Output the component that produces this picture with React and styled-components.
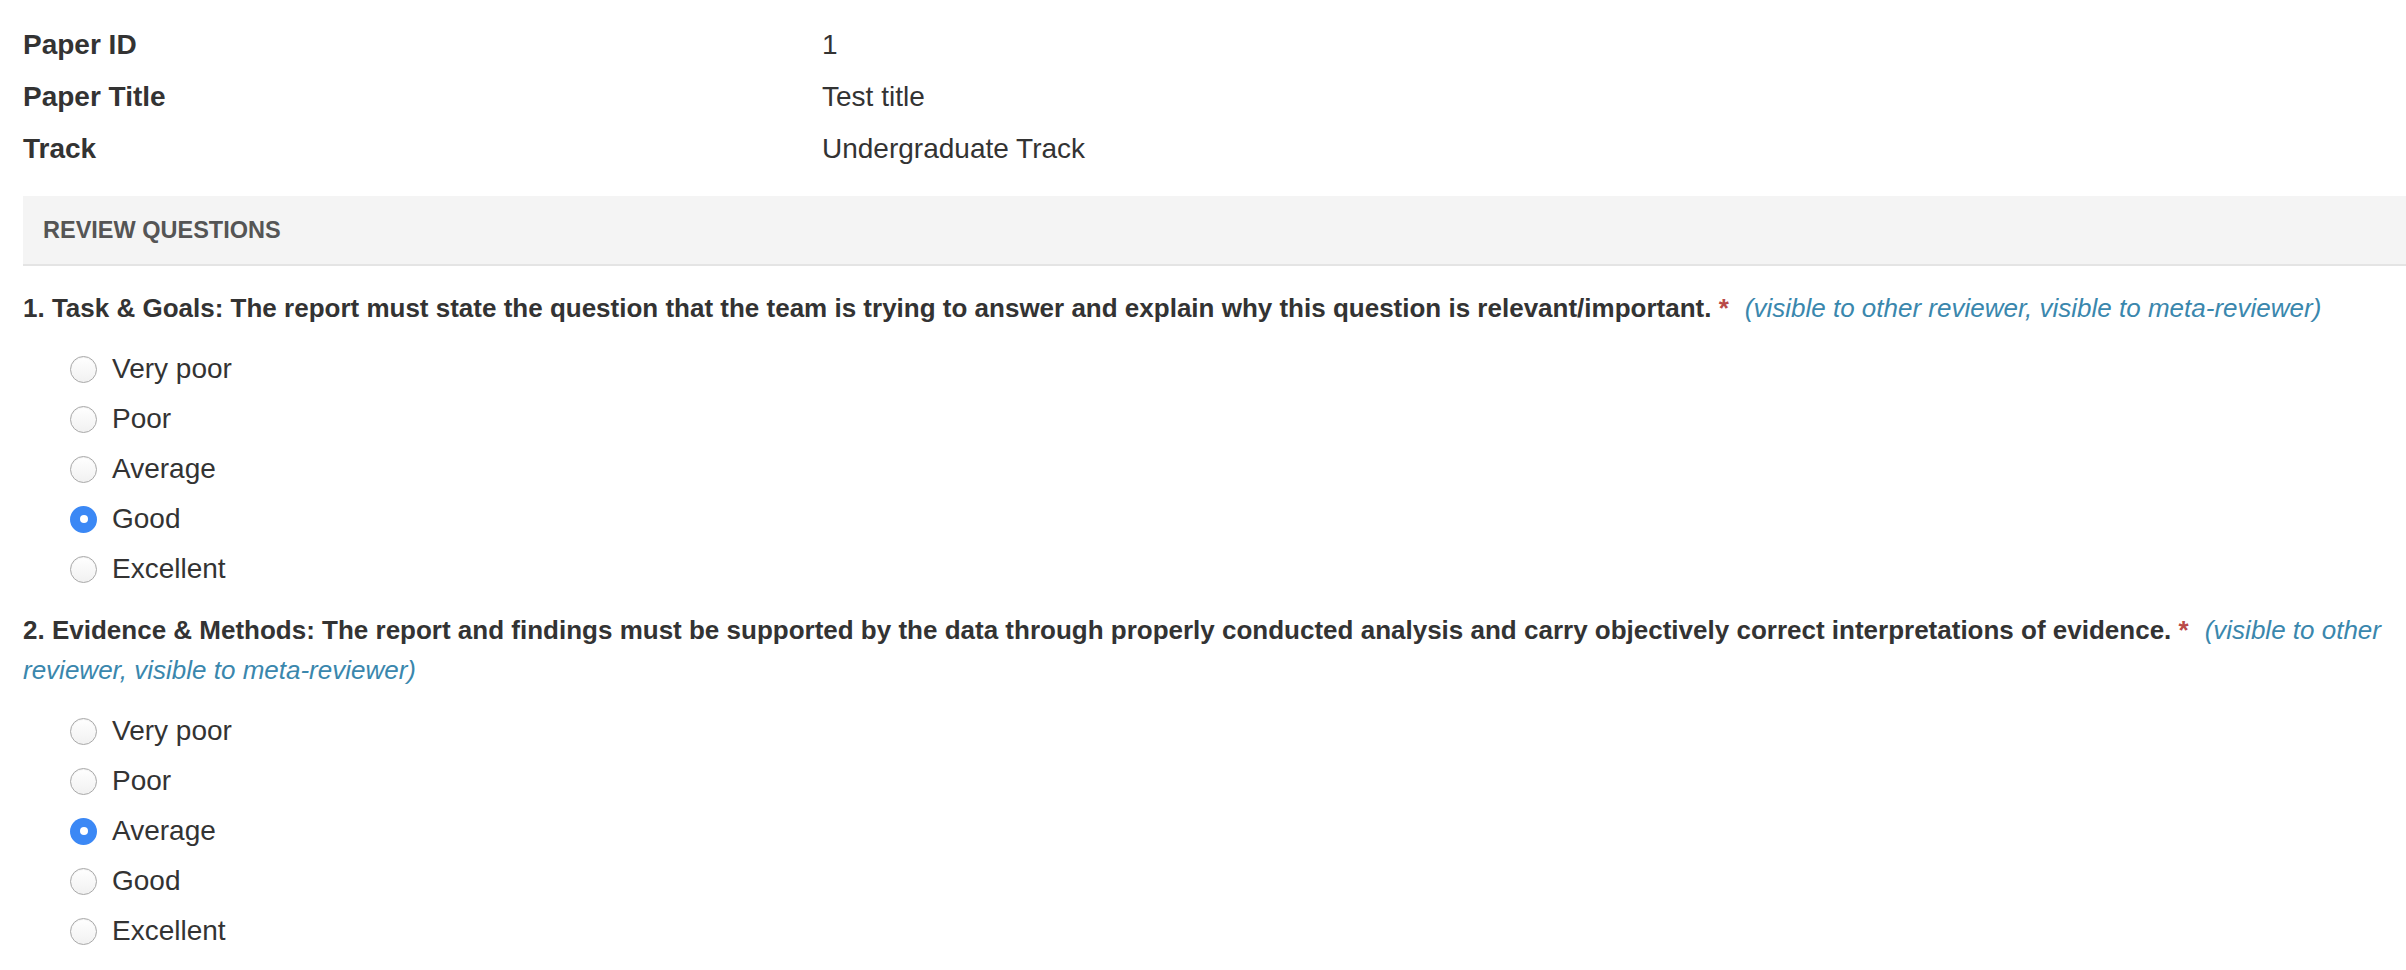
import React from "react";
import styled, { createGlobalStyle } from "styled-components";

const GlobalStyle = createGlobalStyle`
  html, body {
    margin: 0;
    padding: 0;
    background: #fff;
  }
  body {
    font-family: "Liberation Sans", Arial, Helvetica, sans-serif;
    color: #333;
    font-size: 28px;
    overflow: hidden;
  }
`;

const paper = [
  { label: "Paper ID", value: "1" },
  { label: "Paper Title", value: "Test title" },
  { label: "Track", value: "Undergraduate Track" },
];

const options = ["Very poor", "Poor", "Average", "Good", "Excellent"];

const questions = [
  {
    id: 1,
    text: "Task & Goals: The report must state the question that the team is trying to answer and explain why this question is relevant/important.",
    selected: "Good",
  },
  {
    id: 2,
    text: "Evidence & Methods: The report and findings must be supported by the data through properly conducted analysis and carry objectively correct interpretations of evidence.",
    selected: "Average",
  },
];

const App = () => {
  return (
    <>
      <GlobalStyle />
      <Page>
        <InfoTable>
          {paper.map((row) => (
            <InfoRow key={row.label}>
              <InfoLabel>{row.label}</InfoLabel>
              <InfoValue>{row.value}</InfoValue>
            </InfoRow>
          ))}
        </InfoTable>

        <SectionBar>Review Questions</SectionBar>

        {questions.map((q) => (
          <Question key={q.id}>
            <QuestionTitle>
              {q.id}. {q.text} <Required>*</Required>
              <Visibility>
                (visible to other reviewer, visible to meta-reviewer)
              </Visibility>
            </QuestionTitle>
            <Options>
              {options.map((opt) => (
                <Option key={opt}>
                  <Radio checked={q.selected === opt} />
                  <span>{opt}</span>
                </Option>
              ))}
            </Options>
          </Question>
        ))}
      </Page>
    </>
  );
};

const Page = styled.div`
  padding: 19px 0 0 23px;
`;

const InfoTable = styled.div`
  display: flex;
  flex-direction: column;
`;

const InfoRow = styled.div`
  display: grid;
  grid-template-columns: 799px 1fr;
  height: 52px;
  align-items: center;
  line-height: 32px;
`;

const InfoLabel = styled.div`
  font-weight: bold;
`;

const InfoValue = styled.div``;

const SectionBar = styled.div`
  margin-top: 21px;
  height: 68px;
  display: flex;
  align-items: center;
  padding-left: 20px;
  background: #f4f4f4;
  border-bottom: 2px solid #e4e4e4;
  font-size: 23.5px;
  font-weight: bold;
  text-transform: uppercase;
  color: #555;
`;

const Question = styled.div`
  margin-top: 22px;

  & + & {
    margin-top: 16px;
  }
`;

const QuestionTitle = styled.div`
  font-size: 26px;
  font-weight: bold;
  line-height: 40px;
  color: #333;
  padding-right: 4px;
`;

const Required = styled.span`
  color: #b94a48;
`;

const Visibility = styled.span`
  font-weight: normal;
  font-style: italic;
  color: #3a87ad;
  margin-left: 16px;
`;

const Options = styled.div`
  margin-top: 16px;
  display: flex;
  flex-direction: column;
`;

const Option = styled.label`
  display: flex;
  align-items: center;
  height: 50px;
  padding-left: 47px;
  gap: 15px;
  line-height: 32px;
`;

const Radio = styled.span`
  width: 27px;
  height: 27px;
  box-sizing: border-box;
  border-radius: 50%;
  flex-shrink: 0;
  position: relative;
  border: ${(p) => (p.checked ? "none" : "1.5px solid #a8a8a8")};
  background: ${(p) =>
    p.checked ? "#3b88f5" : "linear-gradient(#ffffff, #f1f1f1)"};
  box-shadow: ${(p) =>
    p.checked ? "none" : "inset 0 1px 1px rgba(0,0,0,0.06)"};

  &::after {
    content: "";
    display: ${(p) => (p.checked ? "block" : "none")};
    position: absolute;
    width: 8px;
    height: 8px;
    border-radius: 50%;
    background: #fff;
    top: 9.5px;
    left: 9.5px;
  }
`;

export default App;
